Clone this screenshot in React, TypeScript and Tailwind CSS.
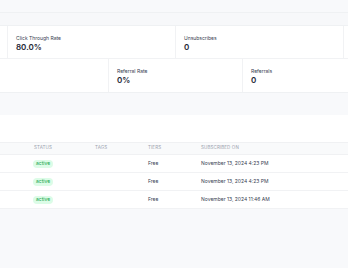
import React from 'react';

const rows = [
  { status: 'active', tier: 'Free', date: 'November 13, 2024 4:23 PM' },
  { status: 'active', tier: 'Free', date: 'November 13, 2024 4:23 PM' },
  { status: 'active', tier: 'Free', date: 'November 13, 2024 11:46 AM' },
];

const Stat: React.FC<{ label?: string; value?: string }> = ({ label, value }) => (
  <div className="bg-white pl-[8px] pt-[9px]">
    {label && <div className="text-[5px] leading-[7px] text-[#374151]">{label}</div>}
    {value && <div className="text-[8px] leading-[11px] font-semibold text-[#1f2937]">{value}</div>}
  </div>
);

const App: React.FC = () => {
  return (
    <div className="w-[348px] h-[268px] overflow-hidden bg-[#f8f9fb] font-['Inter',sans-serif]">
      <div className="h-[13px] border-b border-[#eff1f3]" />
      <div className="h-[13px] bg-[#f7f8fa] border-b border-[#eff1f3]" />

      {/* stats */}
      <div className="ml-[-160px] w-[672px] flex flex-col gap-px bg-[#f1f2f4] border-b border-[#eff1f3]">
        <div className="grid grid-cols-[167px_167px_167px_167px] gap-px h-[32px]">
          <Stat />
          <Stat label="Click Through Rate" value="80.0%" />
          <Stat label="Unsubscribes" value="0" />
          <Stat />
        </div>
        <div className="grid grid-cols-[134px_133px_133px_133px] gap-px h-[33px]">
          <Stat />
          <Stat />
          <Stat label="Referral Rate" value="0%" />
          <Stat label="Referrals" value="0" />
        </div>
      </div>

      {/* subscribers table */}
      <div className="mt-[22px] bg-white">
        <div className="h-[27px]" />
        <div className="grid grid-cols-[33px_62px_53px_53px_1fr] h-[13px] items-center bg-[#f9fafb] border-y border-[#f0f1f3] text-[4.5px] tracking-wide uppercase text-[#9ca3af]">
          <div />
          <div className="pl-px">Status</div>
          <div>Tags</div>
          <div>Tiers</div>
          <div>Subscribed On</div>
        </div>
        {rows.map((r, i) => (
          <div
            key={i}
            className="grid grid-cols-[33px_62px_53px_53px_1fr] h-[18px] items-center border-b border-[#f1f2f4] text-[5px] text-[#374151]"
          >
            <div />
            <div>
              <span className="inline-block rounded-[4px] bg-[#dcfce7] px-[3px] py-[1.5px] leading-[5px] text-[#16a34a]">
                {r.status}
              </span>
            </div>
            <div />
            <div>{r.tier}</div>
            <div>{r.date}</div>
          </div>
        ))}
      </div>
    </div>
  );
};

export default App;
